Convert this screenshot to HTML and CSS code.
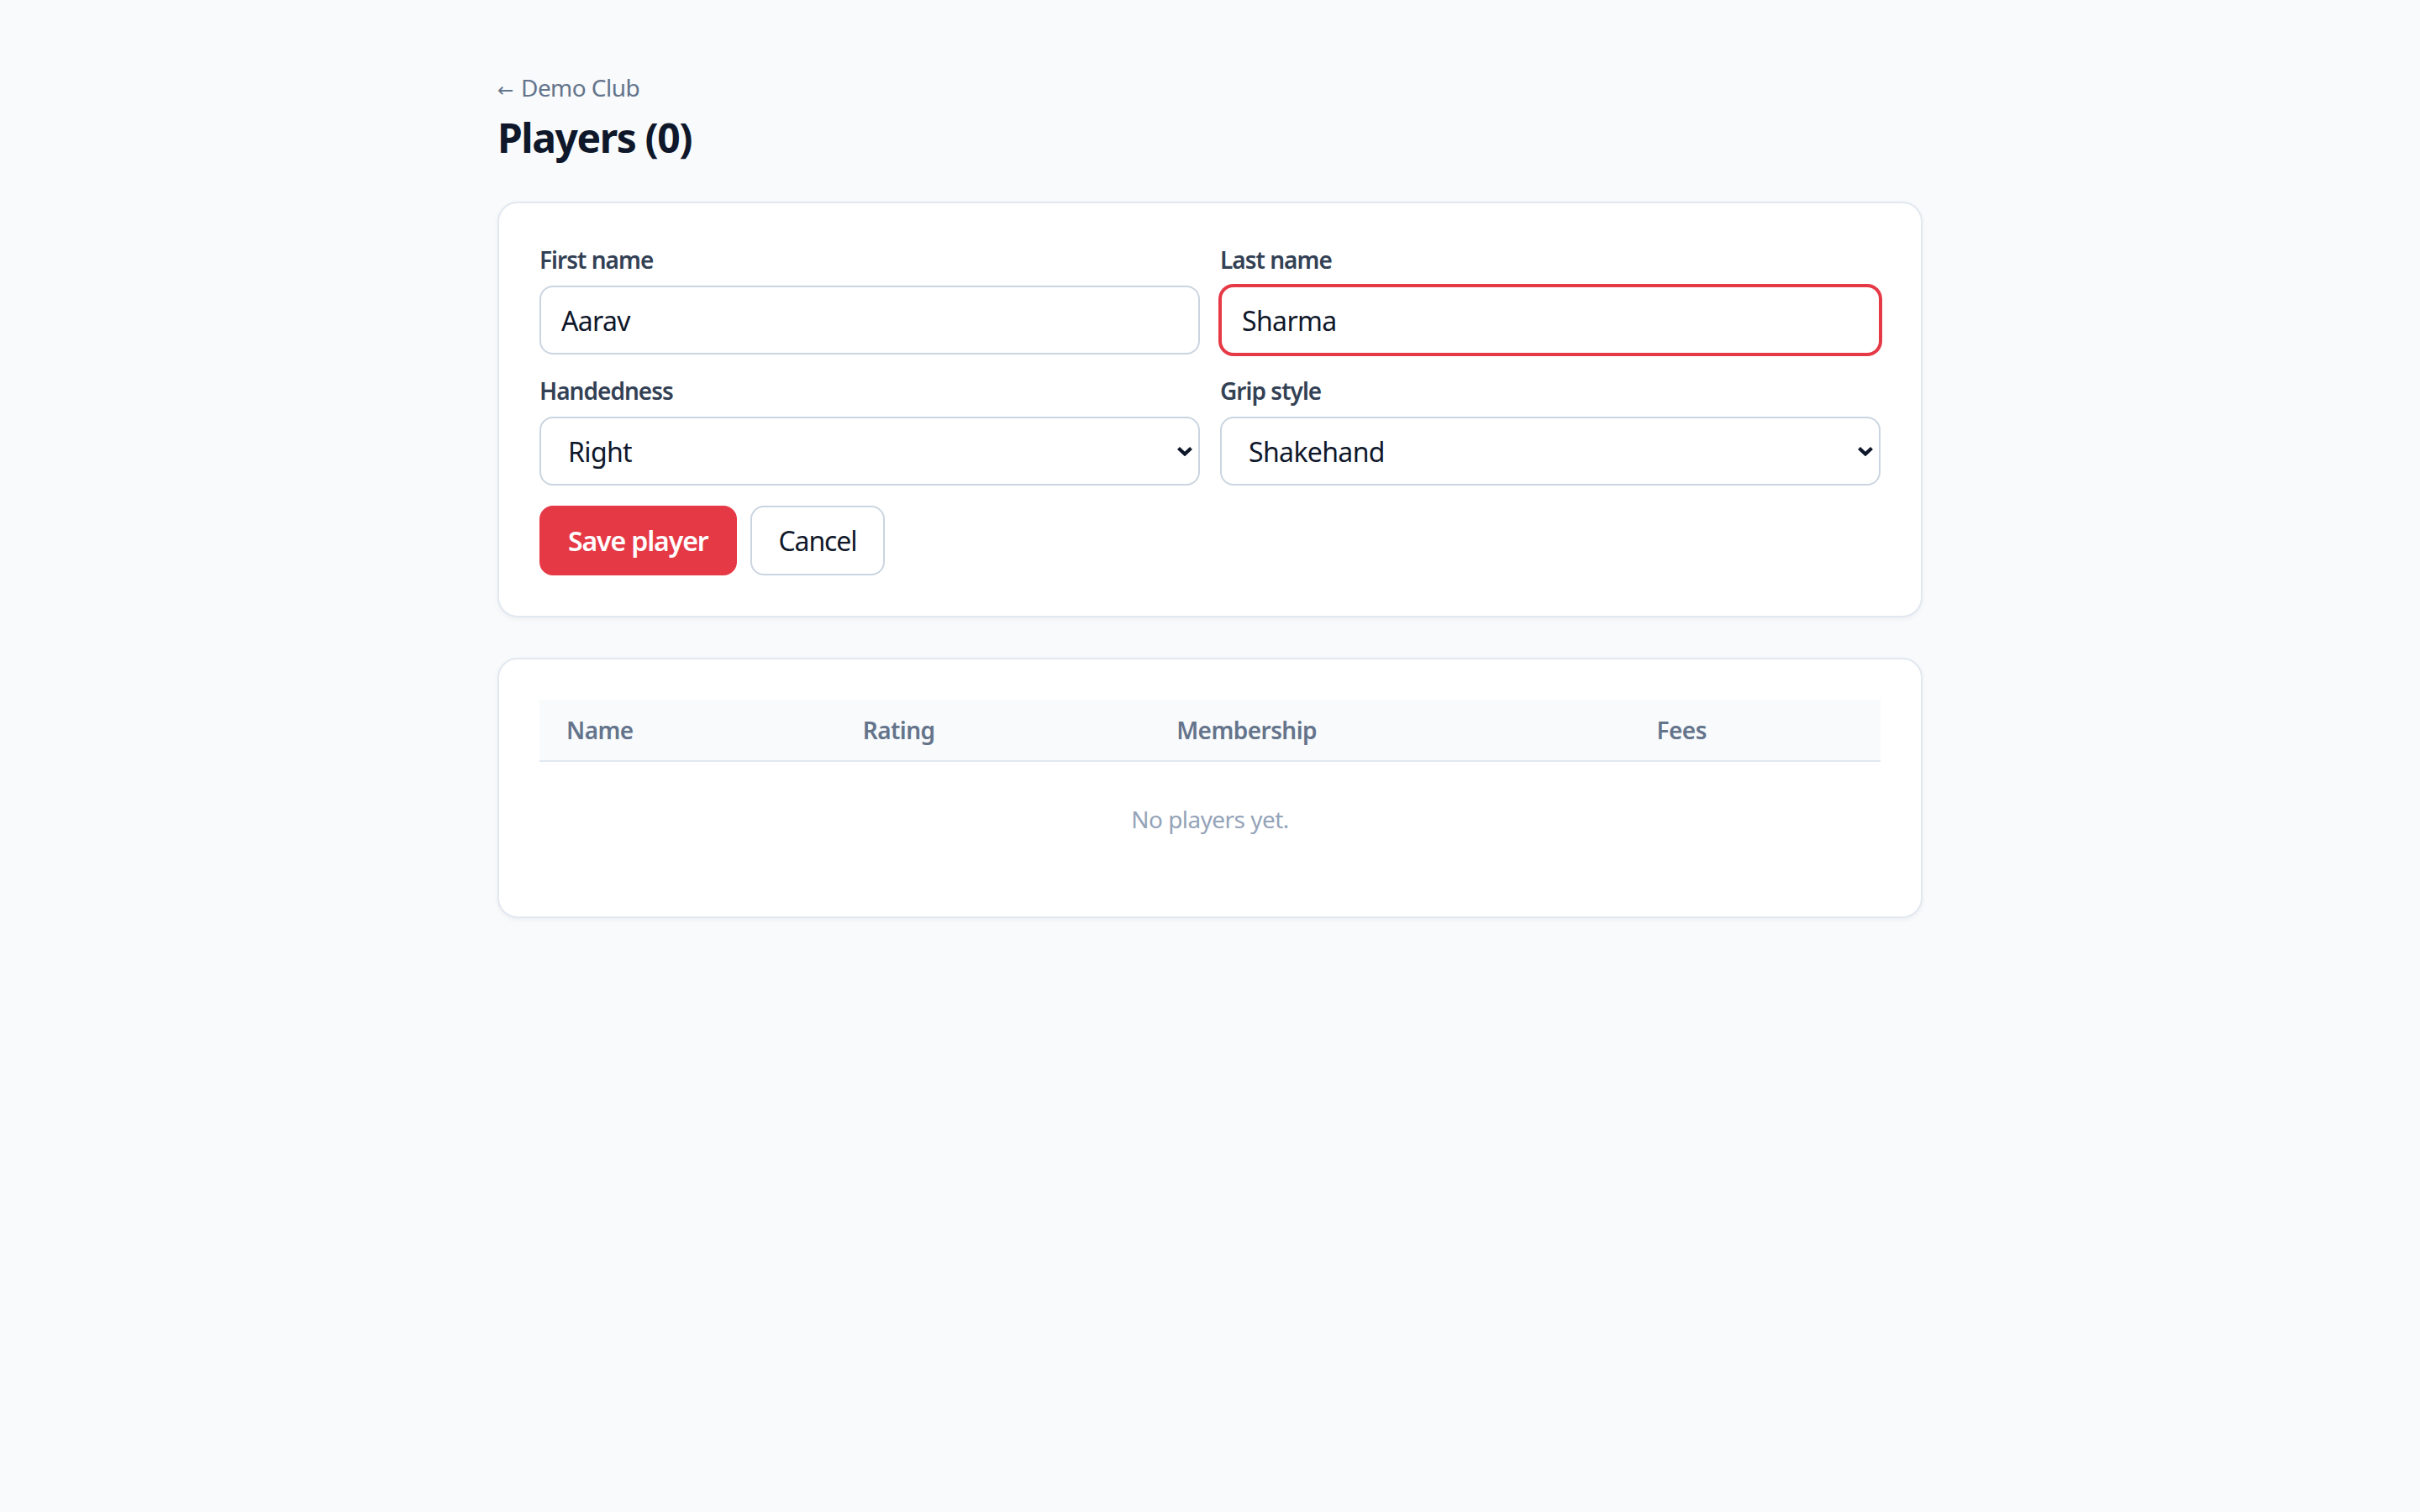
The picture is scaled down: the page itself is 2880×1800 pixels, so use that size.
FILE: index.html
```html
<!DOCTYPE html>
<html lang="en">
<head>
<meta charset="utf-8">
<title>Players</title>
<link rel="stylesheet" href="styles.css">
</head>
<body>
<main class="page">
  <a class="back-link" href="#"><span class="back-arrow">←</span> Demo Club</a>
  <h1 class="page-title">Players (0)</h1>

  <section class="card">
    <form class="player-form">
      <div class="field">
        <label class="field-label" for="first">First name</label>
        <input class="field-input" id="first" type="text" value="Aarav">
      </div>
      <div class="field">
        <label class="field-label" for="last">Last name</label>
        <input class="field-input is-focused" id="last" type="text" value="Sharma">
      </div>
      <div class="field">
        <label class="field-label" for="hand">Handedness</label>
        <div class="select-wrap">
          <select class="field-select" id="hand">
            <option selected>Right</option>
            <option>Left</option>
          </select>
          <svg class="select-chevron" viewBox="0 0 20 12" width="20" height="12" aria-hidden="true"><path d="M2.5 2.5 L10 9.5 L17.5 2.5" fill="none" stroke="#0f172a" stroke-width="4.2"/></svg>
        </div>
      </div>
      <div class="field">
        <label class="field-label" for="grip">Grip style</label>
        <div class="select-wrap">
          <select class="field-select" id="grip">
            <option selected>Shakehand</option>
            <option>Penhold</option>
          </select>
          <svg class="select-chevron" viewBox="0 0 20 12" width="20" height="12" aria-hidden="true"><path d="M2.5 2.5 L10 9.5 L17.5 2.5" fill="none" stroke="#0f172a" stroke-width="4.2"/></svg>
        </div>
      </div>
      <div class="actions">
        <button class="btn btn-primary" type="button">Save player</button>
        <button class="btn btn-secondary" type="button">Cancel</button>
      </div>
    </form>
  </section>

  <section class="card">
    <table class="players-table">
      <thead>
        <tr>
          <th>Name</th>
          <th>Rating</th>
          <th>Membership</th>
          <th>Fees</th>
        </tr>
      </thead>
      <tbody>
        <tr>
          <td class="empty" colspan="4">No players yet.</td>
        </tr>
      </tbody>
    </table>
  </section>
</main>
</body>
</html>
```

FILE: styles.css
```css
* {
  box-sizing: border-box;
}

html, body {
  margin: 0;
  padding: 0;
}

body {
  background: #f8fafc;
  color: #0f172a;
  font-family: "Segoe UI", "Noto Sans", "Open Sans", sans-serif;
  font-size: 32px;
}

.page {
  width: 1696px;
  margin: 0 auto;
  padding: 84px 0 80px;
}

.back-link {
  display: block;
  height: 40px;
  font-size: 28px;
  line-height: 40px;
  color: #64748b;
  text-decoration: none;
  letter-spacing: -0.02em;
}

.back-arrow {
  font-family: "DejaVu Sans", sans-serif;
  font-size: 23px;
  line-height: 16px;
  letter-spacing: 0;
  margin-right: 2px;
}

.page-title {
  margin: 8px 0 44px;
  font-size: 48px;
  line-height: 64px;
  font-weight: 700;
  color: #0f172a;
  letter-spacing: -0.03em;
}

.card {
  background: #ffffff;
  border: 2px solid #e2e8f0;
  border-radius: 24px;
  padding: 48px;
  box-shadow: 0 2px 6px rgba(15, 23, 42, 0.05);
  margin-bottom: 48px;
}

.player-form {
  display: grid;
  grid-template-columns: 1fr 1fr;
  gap: 24px;
}

.field {
  display: flex;
  flex-direction: column;
}

.field-label {
  font-size: 28px;
  line-height: 38px;
  font-weight: 600;
  color: #334155;
  margin-bottom: 12px;
  letter-spacing: -0.035em;
}

.field-input,
.field-select {
  font: inherit;
  font-size: 32px;
  color: #0f172a;
  background: #ffffff;
  border: 2px solid #cbd5e1;
  border-radius: 16px;
  height: 82px;
  padding: 0 24px;
  width: 100%;
  outline: none;
  letter-spacing: -0.02em;
}

.select-wrap {
  position: relative;
}

.field-select {
  -webkit-appearance: none;
  appearance: none;
  padding-left: 32px;
  padding-right: 56px;
}

.select-chevron {
  position: absolute;
  right: 8px;
  top: 50%;
  margin-top: -6px;
  pointer-events: none;
}

.field-input.is-focused {
  border-color: #e63946;
  box-shadow: 0 0 0 2px #e63946;
}

.actions {
  grid-column: 1 / -1;
  display: flex;
  gap: 16px;
}

.btn {
  font: inherit;
  font-size: 32px;
  line-height: 43px;
  padding: 18px 32px;
  border-radius: 16px;
  border: 2px solid transparent;
  cursor: pointer;
  letter-spacing: -0.035em;
}

.btn-primary {
  background: #e63946;
  border-color: #e63946;
  color: #ffffff;
  font-weight: 600;
}

.btn-secondary {
  background: #ffffff;
  border-color: #cbd5e1;
  color: #0f172a;
}

.players-table {
  width: 100%;
  border-collapse: collapse;
  font-size: 28px;
  line-height: 40px;
  letter-spacing: -0.02em;
}

.players-table th {
  text-align: left;
  background: #f8fafc;
  color: #64748b;
  font-weight: 600;
  padding: 16px 32px;
  border-bottom: 2px solid #e2e8f0;
}

.players-table th:nth-child(1) { width: 22.1%; }
.players-table th:nth-child(2) { width: 23.4%; }
.players-table th:nth-child(3) { width: 35.8%; }
.players-table th:nth-child(4) { width: 18.7%; }

.players-table .empty {
  text-align: center;
  color: #94a3b8;
  padding: 48px 32px;
}
```
